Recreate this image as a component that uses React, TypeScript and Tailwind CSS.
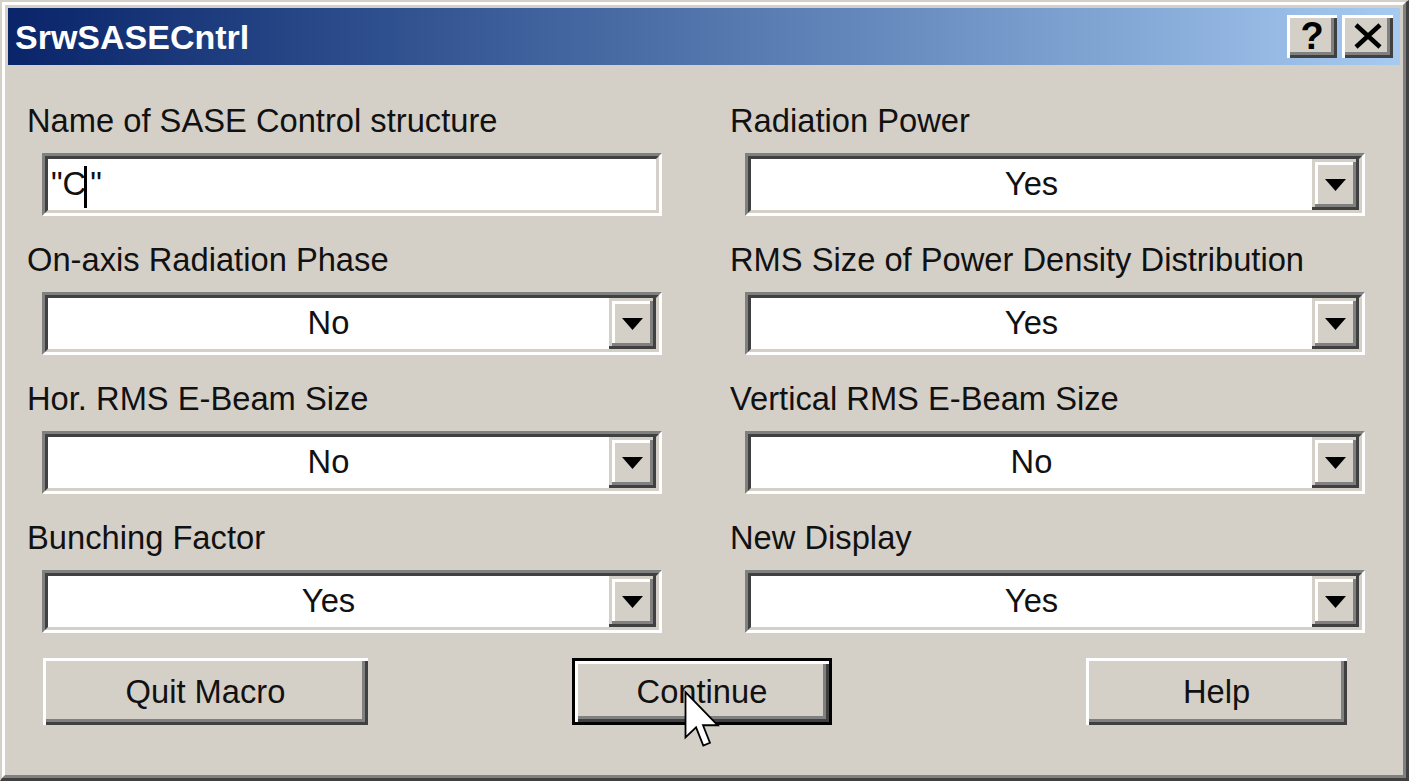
import React from 'react';

const raised =
  'shadow-[inset_3px_3px_0_#ffffff,inset_-3px_-3px_0_#404040,inset_-6px_-6px_0_#808080]';

const Arrow: React.FC = () => (
  <svg width="21" height="12" viewBox="0 0 21 12">
    <polygon points="0,0 21,0 10.5,12" fill="#000" />
  </svg>
);

const Field: React.FC<{ children: React.ReactNode; combo?: boolean }> = ({ children, combo }) => (
  <div className="mt-[12px] ml-[15px] w-[620px] h-[63px] border-[3px] border-t-[#808080] border-l-[#808080] border-b-white border-r-white">
    <div className="h-full flex border-[3px] border-t-[#404040] border-l-[#404040] border-b-[#d4d0c8] border-r-[#d4d0c8] bg-white">
      {combo ? (
        <>
          <div className="flex-1 flex items-center justify-center text-[32.7px] leading-none text-[#111]">
            {children}
          </div>
          <div className="w-[47px] h-full bg-[#d4d0c8] flex items-center justify-center shadow-[inset_-3px_-3px_0_#404040,inset_3px_3px_0_#d4d0c8,inset_-6px_-6px_0_#808080,inset_6px_6px_0_#ffffff]">
            <Arrow />
          </div>
        </>
      ) : (
        children
      )}
    </div>
  </div>
);

const Cell: React.FC<{ label: string; value: string }> = ({ label, value }) => (
  <div className="flex flex-col">
    <div className="h-[40px] leading-[40px] text-[32.7px] text-[#111] whitespace-nowrap">{label}</div>
    <Field combo>{value}</Field>
  </div>
);

export default function App() {
  return (
    <div className="relative w-[1409px] h-[781px] bg-[#d4d0c8] overflow-hidden font-['Liberation_Sans',Arial,sans-serif] border-t-2 border-l-2 border-t-[#d4d0c8] border-l-[#d4d0c8] border-r-[3px] border-b-[3px] border-r-[#404040] border-b-[#404040]">
      <div className="h-full flex flex-col p-[3px] border-[3px] border-t-white border-l-white border-r-[#808080] border-b-[#808080]">
        {/* title bar */}
        <div className="h-[57px] flex items-center px-[7px] bg-linear-to-r from-[#0a246a] to-[#a6caf0]">
          <div className="flex-1 text-white font-bold text-[34px] leading-none">SrwSASECntrl</div>
          <div className="flex gap-[5px]">
            <div className={`w-[50px] h-[43px] bg-[#d4d0c8] flex items-center justify-center text-black font-bold text-[38px] leading-none pb-[2px] ${raised}`}>
              ?
            </div>
            <div className={`w-[51px] h-[43px] bg-[#d4d0c8] flex items-center justify-center pb-[2px] ${raised}`}>
              <svg width="30" height="26" viewBox="0 0 30 26">
                <path d="M3 2 L27 24 M27 2 L3 24" stroke="#000" strokeWidth="4.5" />
              </svg>
            </div>
          </div>
        </div>

        {/* body */}
        <div className="flex-1 pt-[36px] pl-[19px]">
          <div className="grid grid-cols-[703px_1fr] gap-y-[24px]">
            <div className="flex flex-col">
              <div className="h-[40px] leading-[40px] text-[32.7px] text-[#111] whitespace-nowrap">
                Name of SASE Control structure
              </div>
              <Field>
                <div className="flex items-center pl-[3px] text-[32.7px] leading-none text-[#111]">
                  <span>"C</span>
                  <span className="w-[3px] h-[42px] mt-[4px] bg-black -ml-[2px]" />
                  <span className="ml-[3px]">"</span>
                </div>
              </Field>
            </div>
            <Cell label="Radiation Power" value="Yes" />
            <Cell label="On-axis Radiation Phase" value="No" />
            <Cell label="RMS Size of Power Density Distribution" value="Yes" />
            <Cell label="Hor. RMS E-Beam Size" value="No" />
            <Cell label="Vertical RMS E-Beam Size" value="No" />
            <Cell label="Bunching Factor" value="Yes" />
            <Cell label="New Display" value="Yes" />
          </div>

          <div className="mt-[25px] flex h-[67px] pl-[16px]">
            <button className={`w-[325px] h-full bg-[#d4d0c8] text-[32.7px] text-[#111] ${raised}`}>Quit Macro</button>
            <div className="ml-[204px] w-[260px] h-full border-[3px] border-black">
              <button className={`w-full h-full bg-[#d4d0c8] text-[32.7px] text-[#111] ${raised}`}>Continue</button>
            </div>
            <button className={`ml-[254px] w-[261px] h-full bg-[#d4d0c8] text-[32.7px] text-[#111] ${raised}`}>Help</button>
          </div>
        </div>
      </div>

      {/* mouse pointer over Continue */}
      <svg className="absolute left-[682px] top-[688px]" width="38" height="60" viewBox="0 0 12.6 19.5">
        <path
          d="M0.5 0.5 L0.5 15.5 L4 12.2 L6.4 18.2 L8.6 17.3 L6.3 11.5 L11.2 11.5 Z"
          fill="#fff"
          stroke="#000"
          strokeWidth="0.6"
          strokeLinejoin="miter"
        />
      </svg>
    </div>
  );
}
